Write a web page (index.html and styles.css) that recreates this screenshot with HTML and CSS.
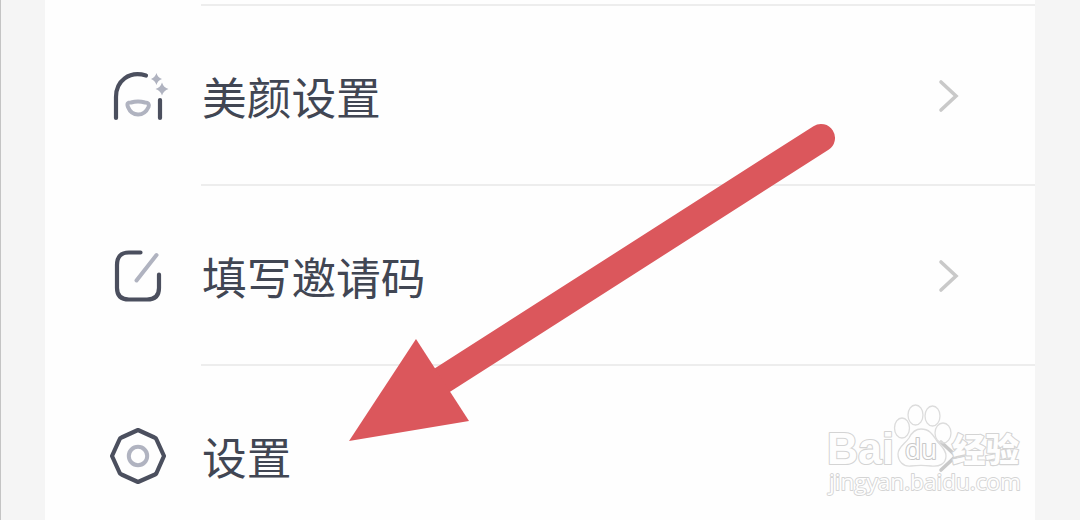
FILE: index.html
```html
<!DOCTYPE html>
<html lang="zh-CN">
<head>
<meta charset="utf-8">
<title>设置</title>
<link rel="stylesheet" href="styles.css">
</head>

<body>
<div class="card">
	<div class="row">
		<svg class="icon" viewBox="0 0 60 60">
			<path class="dark" d="M8 52V31C8 15 21 4.500 38 9.500M52 34V52" />
			<path class="light" d="M23 36.500Q30 34.500 37 36.500Q42 36.500 40.500 41C36 51 24 51 20 41C18.500 37 20 36.500 23 36.500Z" />
			<path class="star" d="M48.500 7Q49.500 11.500 54 13Q49.500 14.500 48.500 19Q47 14.500 43 13Q47 11.500 48.500 7ZM54 16.500Q55.500 21.500 60.500 23Q55.500 24.500 54 29.500Q52.500 24.500 47.500 23Q52.500 21.500 54 16.500Z" />
		</svg>
		<div class="line">
			<span class="label">美颜设置</span>
			<svg class="chevron" viewBox="0 0 24 40"><path d="M4 6L19 20L4 34" /></svg>
		</div>
	</div>
	<div class="row">
		<svg class="icon" viewBox="0 0 60 60">
			<path class="dark" d="M32.500 6.500H21Q9 6.500 9 19V42Q9 53.500 21 53.500H39Q51 53.500 51 42V28.500" />
			<path class="light" d="M28.500 34.500L48.500 9" />
		</svg>
		<div class="line">
			<span class="label">填写邀请码</span>
			<svg class="chevron" viewBox="0 0 24 40"><path d="M4 6L19 20L4 34" /></svg>
		</div>
	</div>
	<div class="row">
		<svg class="icon" viewBox="0 0 60 60">
			<path class="dark" d="M30 4L46.500 11.500Q48 12 48.500 13.500L56 30L48.500 47Q48 48 47 48.500L30 56L13.500 48.500Q12 48 11.500 46.500L4 30L11.500 13.500Q12 12 13.500 11.500Z" />
			<circle class="light" cx="30" cy="30" r="9.200" />
		</svg>
		<div class="line">
			<span class="label">设置</span>
			<svg class="chevron" viewBox="0 0 24 40"><path d="M4 6L19 20L4 34" /></svg>
		</div>
	</div>
</div>

<svg class="arrow" viewBox="0 0 1080 520">
	<path class="shaft" d="M821 138L430 388" />
	<path class="head" d="M349 441L416 339L469 421Z" />
</svg>

<svg class="watermark" viewBox="815 395 220 115">
	<g class="paw">
		<ellipse cx="902" cy="428" rx="7.500" ry="10" />
		<ellipse cx="915.500" cy="415" rx="7.500" ry="10" />
		<ellipse cx="932.500" cy="416" rx="7.500" ry="10" />
		<ellipse cx="943" cy="433" rx="8" ry="10" />
		<path d="M921 429C930 429 933 435 937 441C942 447 946 450 946 456C946 464 939 467 931 466C924 465 918 465 911 466C903 467 898 461 898 454C898 447 905 444 909 438C912 432 915 429 921 429Z" />
	</g>
	<text class="brand" x="827" y="464" textLength="67" lengthAdjust="spacingAndGlyphs">Bai</text>
	<text class="du" x="905" y="459" textLength="32" lengthAdjust="spacingAndGlyphs">du</text>
	<text class="cn" x="952" y="462" textLength="67" lengthAdjust="spacingAndGlyphs">经验</text>
	<text class="url" x="829" y="490" textLength="192" lengthAdjust="spacingAndGlyphs">jingyan.baidu.com</text>
</svg>
</body>
</html>
```
FILE: styles.css
```css
* { box-sizing: border-box; }
body { margin: 0; height: 520px; overflow: hidden; background: #f5f5f5; border-left: 1px solid #c4c4c4; font-family: "Noto Sans CJK SC", sans-serif; }
.card { width: 990px; height: 520px; margin-left: 44px; padding-top: 4px; background: #fefefe; overflow: hidden; }
.row { display: flex; height: 180px; padding-left: 63px; }
.icon { width: 60px; height: 60px; margin: 62px 33px 0 0; flex: none; overflow: visible; fill: none; stroke-linecap: round; stroke-linejoin: round; }
.dark { stroke: #4b4f5e; stroke-width: 4.2; }
.light { stroke: #b0b3c0; stroke-width: 4; }
.star { fill: #b0b3c0; }
.line { flex: 1; display: flex; align-items: center; justify-content: space-between; padding: 2px 74px 0 1px; border-top: 2px solid #ededed; }
.label { font-size: 44.7px; line-height: 60px; color: #414653; }
.chevron { width: 24px; height: 40px; fill: none; stroke: #c9c9c9; stroke-width: 3.6; stroke-linecap: round; }

.arrow { position: absolute; left: 0; top: 0; width: 1080px; height: 520px; }
.shaft { stroke: #db575c; stroke-width: 28; stroke-linecap: round; }
.head { fill: #db575c; }

.watermark { position: absolute; left: 815px; top: 395px; width: 220px; height: 115px; }
.paw { fill: #fefefe; fill-opacity: 0.3; stroke: #dcdcdc; stroke-width: 1.3; }
.watermark text { fill: #fefefe; stroke: #d4d4d4; stroke-width: 2.2; paint-order: stroke; stroke-linejoin: round; }
.brand { font: bold 44px "Liberation Sans", sans-serif; }
.watermark .du { font: 27px "Open Sans", sans-serif; stroke: #c8c8c8; }
.cn { font: 900 33px "Noto Sans CJK SC", sans-serif; }
.watermark .url { font: 22px "Open Sans", sans-serif; stroke-width: 1.8; }
```
